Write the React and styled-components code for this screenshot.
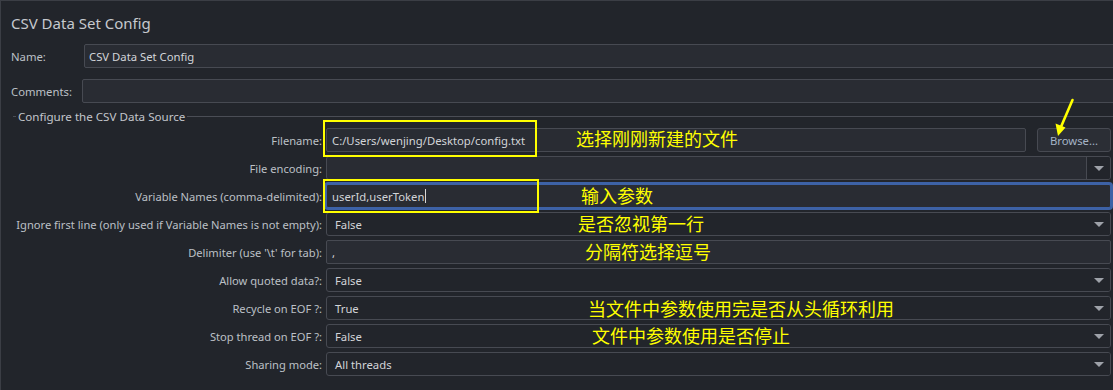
import React from 'react';
import styled, { createGlobalStyle } from 'styled-components';

const GlobalStyle = createGlobalStyle`
  html, body {
    margin: 0;
    padding: 0;
    background: #22252b;
    overflow: hidden;
  }
  body {
    font-family: "Noto Sans", "Open Sans", sans-serif;
  }
`;

const Panel = styled.div`
  position: relative;
  box-sizing: border-box;
  width: 1116px;
  height: 390px;
  overflow: hidden;
  border-top: 1px solid #3b3e45;
  border-left: 1px solid #3b3e45;
  background: #22252b;
  color: #bcc0c6;
  font-size: 11.3px;
`;

const Title = styled.div`
  height: 43px;
  padding-left: 10px;
  display: flex;
  align-items: center;
  font-size: 15px;
  color: #c6c9ce;
`;

const TopRow = styled.div`
  display: flex;
  align-items: center;
  height: 24px;
  margin-top: ${(p) => p.$gap || 0}px;
  padding-left: 10px;
`;

const TopLabel = styled.div`
  width: ${(p) => p.$width}px;
  flex: none;
`;

const TextBox = styled.div`
  box-sizing: border-box;
  flex: 1;
  height: 24px;
  display: flex;
  align-items: center;
  padding: 0 ${(p) => p.$pad || 5}px;
  background: #292c33;
  border: 1px solid ${(p) => (p.$focused ? '#3d62a6' : '#474a52')};
  border-radius: 2px;
  box-shadow: ${(p) => (p.$focused ? '0 0 0 2px #3d62a6' : 'none')};
  color: #d2d4d8;
  white-space: nowrap;
  overflow: hidden;
`;

const SectionHead = styled.div`
  display: flex;
  align-items: center;
  height: 17px;
  margin-top: 5px;
  padding-left: 12px;
  padding-right: 3px;
  gap: 2px;
  color: #c3c6cb;
  font-size: 11.6px;
`;

const Rule = styled.div`
  height: 1px;
  background: #4a4d55;
  flex: ${(p) => (p.$grow ? 1 : 'none')};
  width: ${(p) => (p.$grow ? 'auto' : '3px')};
`;

const Fields = styled.div`
  display: grid;
  grid-template-columns: 309px 1fr;
  grid-auto-rows: 24px;
  column-gap: 4px;
  row-gap: 4px;
  margin-top: 3px;
  padding-left: 12px;
  padding-right: 5px;
`;

const FieldLabel = styled.div`
  display: flex;
  align-items: center;
  justify-content: flex-end;
  white-space: nowrap;
  font-size: 11.15px;
`;

const FileRow = styled.div`
  display: flex;
  gap: 11px;
`;

const BrowseButton = styled.button`
  box-sizing: border-box;
  width: 74px;
  height: 24px;
  padding: 0;
  background: #2b2e35;
  border: 1px solid #474a52;
  border-radius: 3px;
  color: #a4b3c6;
  font-family: inherit;
  font-size: 11.3px;
`;

const Combo = styled.div`
  box-sizing: border-box;
  display: flex;
  align-items: stretch;
  height: 24px;
  border: 1px solid #474a52;
  border-radius: 3px;
  background: ${(p) => (p.$editable ? '#292c33' : '#22252b')};
  color: #d2d4d8;
  overflow: hidden;
`;

const ComboValue = styled.div`
  flex: 1;
  display: flex;
  align-items: center;
  padding-left: 8px;
`;

const ArrowCell = styled.div`
  width: 23px;
  display: flex;
  align-items: center;
  justify-content: center;
  background: #22252b;
  border-left: 1px solid ${(p) => (p.$split ? '#474a52' : 'transparent')};
`;

const Caret = styled.span`
  width: 0;
  height: 0;
  border-left: 5px solid transparent;
  border-right: 5px solid transparent;
  border-top: 5px solid #9ea2a9;
`;

const Cursor = styled.span`
  display: inline-block;
  width: 1px;
  height: 14px;
  margin-left: 1px;
  background: #d8d8d8;
`;

const Note = styled.span`
  position: absolute;
  left: ${(p) => p.$x}px;
  top: ${(p) => p.$y}px;
  font-family: "Noto Sans CJK SC", sans-serif;
  font-size: 18px;
  line-height: 18px;
  color: #ffff00;
  white-space: nowrap;
`;

const Mark = styled.div`
  position: absolute;
  box-sizing: border-box;
  left: ${(p) => p.$x}px;
  top: ${(p) => p.$y}px;
  width: ${(p) => p.$w}px;
  height: ${(p) => p.$h}px;
  border: 2px solid #ffff00;
`;

const Pointer = styled.svg`
  position: absolute;
  left: 1050px;
  top: 96px;
`;

const ComboField = ({ value, editable }) => (
  <Combo $editable={editable}>
    <ComboValue>{value}</ComboValue>
    <ArrowCell $split={editable}>
      <Caret />
    </ArrowCell>
  </Combo>
);

const App = () => (
  <>
    <GlobalStyle />
    <Panel>
      <Title>CSV Data Set Config</Title>
      <TopRow>
        <TopLabel $width={73}>Name:</TopLabel>
        <TextBox $pad={4}>CSV Data Set Config</TextBox>
      </TopRow>
      <TopRow $gap={11}>
        <TopLabel $width={71}>Comments:</TopLabel>
        <TextBox />
      </TopRow>

      <SectionHead>
        <Rule />
        <span>Configure the CSV Data Source</span>
        <Rule $grow />
      </SectionHead>

      <Fields>
        <FieldLabel>Filename:</FieldLabel>
        <FileRow>
          <TextBox>C:/Users/wenjing/Desktop/config.txt</TextBox>
          <BrowseButton>Browse...</BrowseButton>
        </FileRow>

        <FieldLabel>File encoding:</FieldLabel>
        <ComboField value="" editable />

        <FieldLabel>Variable Names (comma-delimited):</FieldLabel>
        <TextBox $focused>
          userId,userToken
          <Cursor />
        </TextBox>

        <FieldLabel>Ignore first line (only used if Variable Names is not empty):</FieldLabel>
        <ComboField value="False" />

        <FieldLabel>Delimiter (use '\t' for tab):</FieldLabel>
        <TextBox>,</TextBox>

        <FieldLabel>Allow quoted data?:</FieldLabel>
        <ComboField value="False" />

        <FieldLabel>Recycle on EOF ?:</FieldLabel>
        <ComboField value="True" />

        <FieldLabel>Stop thread on EOF ?:</FieldLabel>
        <ComboField value="False" />

        <FieldLabel>Sharing mode:</FieldLabel>
        <ComboField value="All threads" />
      </Fields>

      <Mark $x={322} $y={119} $w={214} $h={37} />
      <Mark $x={322} $y={178} $w={216} $h={34} />
      <Pointer width="30" height="42" viewBox="0 0 30 42">
        <path d="M21.5 3 L9.5 31" stroke="#ffff00" strokeWidth="2.6" fill="none" strokeLinecap="round" />
        <path d="M7 39 L4.5 26.5 L14.5 30.5 Z" fill="#ffff00" />
      </Pointer>

      <Note $x={575} $y={128}>选择刚刚新建的文件</Note>
      <Note $x={580} $y={185}>输入参数</Note>
      <Note $x={577} $y={213}>是否忽视第一行</Note>
      <Note $x={584} $y={241}>分隔符选择逗号</Note>
      <Note $x={587} $y={298}>当文件中参数使用完是否从头循环利用</Note>
      <Note $x={591} $y={325}>文件中参数使用是否停止</Note>
    </Panel>
  </>
);

export default App;
